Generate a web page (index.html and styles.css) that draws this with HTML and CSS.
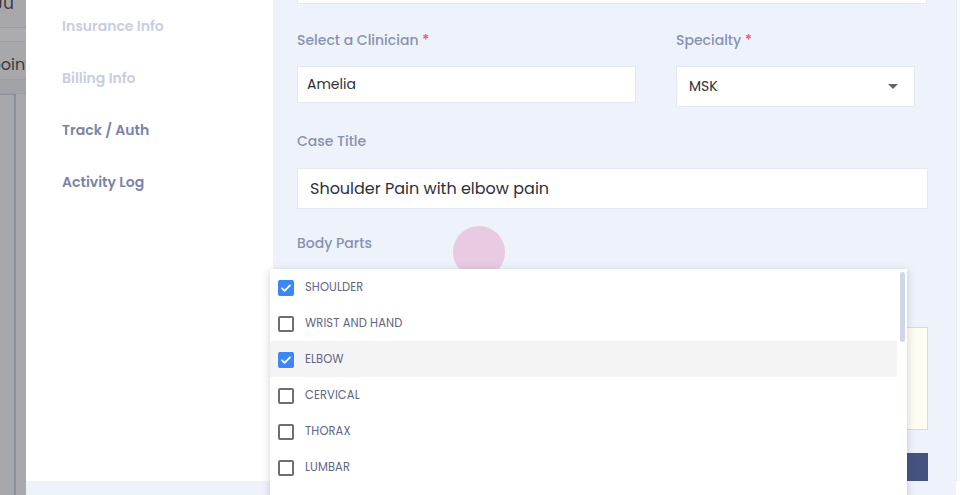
FILE: index.html
```html
<!DOCTYPE html>
<html>
<head>
<meta charset="utf-8">
<link rel="stylesheet" href="styles.css">
</head>
<body>
<div class="page">
  <div class="bgstrip">
    <div class="bg-top"><span class="bg-text">. Ju</span></div>
    <div class="bg-band"></div>
    <div class="bg-row"><span class="bg-text">point</span></div>
    <div class="bg-band dark"></div>
    <div class="bg-cols">
      <div class="bg-col"></div>
      <div class="bg-col2"></div>
    </div>
  </div>
  <div class="modal">
    <div class="modal-body">
      <aside class="sidebar">
        <div class="nav-item muted">Insurance Info</div>
        <div class="nav-item muted">Billing Info</div>
        <div class="nav-item">Track / Auth</div>
        <div class="nav-item">Activity Log</div>
      </aside>
      <main class="main">
        <div class="input top-input"></div>
        <div class="row">
          <div class="field clin">
            <label class="label">Select a Clinician <span class="req">*</span></label>
            <div class="input short">Amelia</div>
          </div>
          <div class="field spec">
            <label class="label">Specialty <span class="req">*</span></label>
            <div class="input select">MSK<span class="caret"></span></div>
          </div>
        </div>
        <label class="label case-label">Case Title</label>
        <div class="input big">Shoulder Pain with elbow pain</div>
        <label class="label body-label">Body Parts</label>
        <div class="note"></div>
        <div class="btn-row"><div class="btn"></div></div>
      </main>
      <div class="edge"></div>
    </div>
    <div class="modal-foot"></div>
  </div>
</div>

<div class="touch"></div>

<div class="dropdown">
  <div class="opt"><span class="cb on"><svg viewBox="0 0 16 16"><path d="M4 8.3l2.6 2.6L12 5.4" fill="none" stroke="#fff" stroke-width="1.8" stroke-linecap="round" stroke-linejoin="round"/></svg></span>SHOULDER</div>
  <div class="opt"><span class="cb"></span>WRIST AND HAND</div>
  <div class="opt hl"><span class="cb on"><svg viewBox="0 0 16 16"><path d="M4 8.3l2.6 2.6L12 5.4" fill="none" stroke="#fff" stroke-width="1.8" stroke-linecap="round" stroke-linejoin="round"/></svg></span>ELBOW</div>
  <div class="opt"><span class="cb"></span>CERVICAL</div>
  <div class="opt"><span class="cb"></span>THORAX</div>
  <div class="opt"><span class="cb"></span>LUMBAR</div>
  <div class="scrollbar"></div>
</div>
</body>
</html>
```
FILE: styles.css
```css
* { box-sizing: border-box; }
html, body { margin: 0; padding: 0; }
body {
  width: 960px;
  height: 495px;
  overflow: hidden;
  font-family: "Poppins", "Inter", "Noto Sans", sans-serif;
  position: relative;
  background: #fff;
}
.page { display: flex; height: 495px; }

/* dimmed background page */
.bgstrip {
  width: 26px;
  flex: none;
  background: #a8a8aa;
  display: flex;
  flex-direction: column;
  overflow: hidden;
}
.bg-top { height: 28px; border-bottom: 1px solid #9b9ca3; }
.bg-text { font-size: 17px; color: #3a3a40; white-space: nowrap; display: block; margin-left: -14px; line-height: 1; margin-top: -5px; }
.bg-band { height: 14px; background: #acacb0; border-bottom: 1px solid #9c9da3; }
.bg-band.dark { background: #a2a3a8; }
.bg-row { height: 38px; border-bottom: 1px solid #9c9da3; }
.bg-row .bg-text { margin-top: 15px; margin-left: -10px; font-size: 16px; }
.bg-cols { flex: 1; display: flex; }
.bg-col { width: 16px; border-right: 2px solid #8a8ea6; background: #a8a8aa; background-image: linear-gradient(#8e8f98, #8e8f98); background-size: 100% 1px; background-repeat: no-repeat; }
.bg-col2 { flex: 1; background: #a9a9ab; }

/* modal */
.modal { flex: 1; display: flex; flex-direction: column; }
.modal-body { flex: 1; display: flex; min-height: 0; }
.sidebar {
  width: 247px;
  flex: none;
  background: #fff;
  padding: 17px 0 0 36px;
}
.nav-item {
  font-size: 14px;
  font-weight: 600;
  color: #7a84a8;
  height: 52px;
  line-height: 18px;
}
.nav-item.muted { color: #c8cde0; }

.main {
  width: 683px;
  flex: none;
  background: #eef3fb;
  padding: 0 28px 0 24px;
  overflow: hidden;
}
.edge { flex: 1; background: #f8f9fc; border-left: 1px solid #e6eaf2; }
.modal-foot { height: 14px; background: #eef3fb; margin-right: 4px; }

.input {
  background: #fff;
  border: 1px solid #e3e8f1;
  font-size: 14px;
  color: #2f2f3a;
  display: flex;
  align-items: center;
}
.top-input { height: 34px; margin-top: -30px; width: 630px; }

.label {
  display: block;
  font-size: 14px;
  font-weight: 500;
  color: #8891b2;
  line-height: 20px;
}
.req { color: #ef5466; }

.row { display: flex; gap: 40px; margin-top: 26px; }
.field.clin { width: 339px; }
.field.spec { width: 239px; }
.field .input { margin-top: 16px; }
.short { height: 37px; padding-left: 9px; }
.select { height: 41px; padding-left: 12px; position: relative; justify-content: space-between; padding-right: 16px; }
.caret {
  width: 0; height: 0;
  border-left: 5px solid transparent;
  border-right: 5px solid transparent;
  border-top: 5px solid #666;
}
.case-label { margin-top: 24px; }
.big { height: 41px; margin-top: 17px; padding-left: 12px; font-size: 16px; width: 631px; }
.body-label { margin-top: 24px; }
.note {
  margin-top: 74px;
  height: 103px;
  width: 631px;
  background: #fffcf2;
  border: 1px solid #f7da8f;
}
.btn-row { display: flex; justify-content: flex-end; width: 631px; margin-top: 23px; }
.btn { width: 140px; height: 28px; background: #43527f; }

/* touch indicator */
.touch {
  position: absolute;
  left: 453px;
  top: 226px;
  width: 52px;
  height: 52px;
  border-radius: 50%;
  background: rgba(228, 168, 206, 0.55);
}

/* dropdown overlay */
.dropdown {
  position: absolute;
  left: 270px;
  top: 269px;
  width: 637px;
  height: 240px;
  background: #fff;
  box-shadow: 0 2px 8px rgba(60, 70, 100, 0.25);
  padding-right: 10px;
}
.opt {
  height: 36px;
  display: flex;
  align-items: center;
  padding-left: 8px;
  padding-top: 1px;
  font-size: 11.5px;
  color: #5f6686;
  letter-spacing: 0.1px;
}
.opt.hl { background: #f4f4f4; }
.cb {
  width: 16px; height: 16px;
  border: 2px solid #6f6f6f;
  border-radius: 2px;
  margin-right: 11px;
  flex: none;
  display: flex;
}
.cb.on { background: #3d86f5; border-color: #3d86f5; border-width: 0; }
.cb svg { width: 16px; height: 16px; }
.scrollbar {
  position: absolute;
  right: 2px;
  top: 3px;
  width: 5px;
  height: 70px;
  border-radius: 3px;
  background: #cfd6ea;
}
```
